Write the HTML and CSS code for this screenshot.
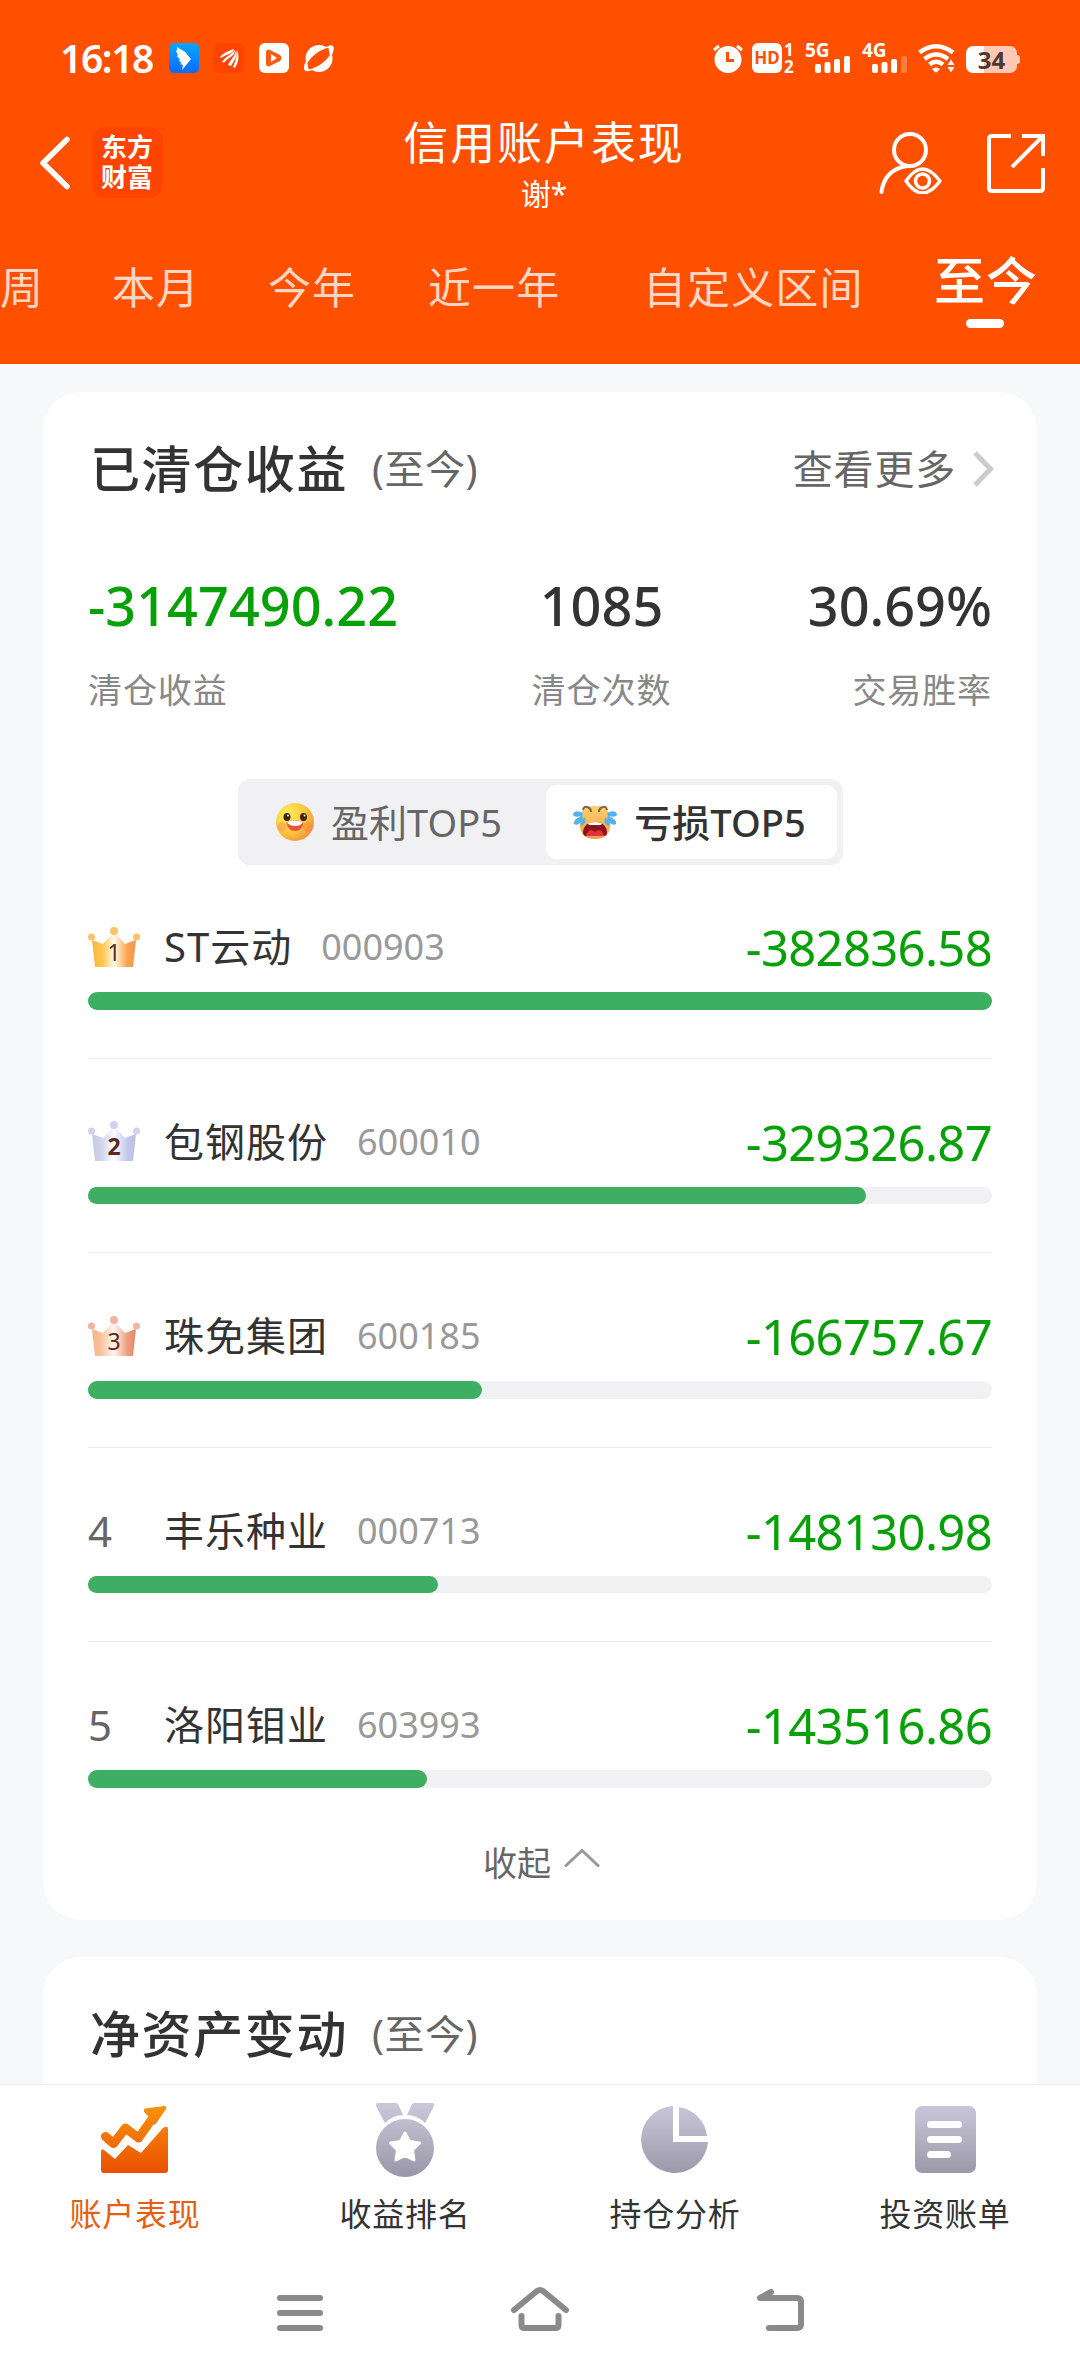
FILE: index.html
```html
<!DOCTYPE html>
<html lang="zh-CN">

<head>
  <meta charset="utf-8">
  <title>信用账户表现</title>
  <link rel="stylesheet" href="styles.css">
</head>

<body>

  <div class="header">
    <div class="status-bar">
      <span class="clock">16:18</span>
      <div class="status-apps">
        <svg width="30" height="30" viewBox="0 0 30 30">
          <defs>
            <linearGradient id="blue" x1="0" y1="0" x2="0" y2="1"><stop offset="0" stop-color="#0aa5ff"/><stop offset="1" stop-color="#0a6cff"/></linearGradient>
          </defs>
          <rect width="30" height="30" rx="5" fill="url(#blue)"/>
          <path d="M8 4c4 3 9 4 10.500 8L22 16l-4 5-5 6 1-5-3-1 2-1-3-2 1-1-3-4 1-1-2-4 1-1z" fill="#fff"/>
        </svg>
        <svg width="30" height="30" viewBox="0 0 30 30">
          <rect width="30" height="30" rx="5" fill="#ff4400"/>
          <path d="M6 14c3-4 8-6 14-8-1 5-7 5-13 9zM8 19c3-5 9-7 13-12 0 6-6 7-11 12.500zM14 22c2-5 7-8 8-15 2 7-2 10-5 16zM19 24c2-5 4-9 4-17 3 7 1 13-2 18z" fill="#fff"/>
        </svg>
        <svg width="30" height="30" viewBox="0 0 30 30">
          <rect width="30" height="30" rx="6" fill="#fff"/>
          <path d="M10 6.500l11 5.500q3 3 0 6l-11 5.500q-3 0-3-3v-11q0-3 3-3z" fill="#fa5a12"/>
          <path d="M12 11l6 4-6 4z" fill="#fff"/>
        </svg>
        <svg width="30" height="30" viewBox="0 0 30 30">
          <circle cx="15" cy="15.500" r="13.500" fill="#fff"/>
          <ellipse cx="15" cy="15.500" rx="16.500" ry="6.500" transform="rotate(-38 15 15.500)" fill="#ff5000" stroke="#fff" stroke-width="1.500"/>
          <path d="M24 3q5-2 6 2-1 5-4 8-1-6-2-10zM5 28q-5 1-5-3 0-5 3-7 1 6 2 10z" fill="#fff"/>
        </svg>
      </div>
      <div class="status-right">
        <svg class="alarm" width="30" height="30" viewBox="0 0 30 30" fill="none">
          <circle cx="15" cy="16.500" r="13.500" fill="#fff"/>
          <path d="M1 7l5-4M29 7l-5-4" stroke="#fff" stroke-width="3"/>
          <path d="M14.500 9v8.500H21" stroke="#ff5000" stroke-width="3"/>
        </svg>
        <span class="hd">HD</span>
        <span class="sims"><i>1</i><i>2</i></span>
        <div class="signal">
          <span>5G</span>
          <svg width="36" height="17" viewBox="0 0 36 17" fill="#fff">
            <rect y="8" width="6" height="9" rx="2"/><rect x="9.500" y="6" width="6" height="11" rx="2"/><rect x="19" y="3" width="6" height="14" rx="2"/><rect x="29" width="6" height="17" rx="2"/>
          </svg>
        </div>
        <div class="signal">
          <span>4G</span>
          <svg width="36" height="17" viewBox="0 0 36 17" fill="#fff">
            <rect y="8" width="6" height="9" rx="2"/><rect x="9.500" y="6" width="6" height="11" rx="2"/><rect x="19" y="3" width="6" height="14" rx="2"/><rect x="29" width="6" height="17" rx="2" opacity=".25"/>
          </svg>
        </div>
        <svg class="wifi" width="37" height="30" viewBox="0 0 37 30" fill="none" stroke="#fff" stroke-width="4.500">
          <path d="M1.500 9.500Q18 -3 35 9.500M6.500 16Q18 7 30 16M11.500 21.500Q18 16 25 21.500"/>
          <path d="M14 26q4-3 8 0l-4 4z" fill="#fff" stroke="none"/>
          <path d="M29.500 22l3.500-5.500 3.500 5.500zM29.500 24l3.500 5.500 3.500-5.500z" fill="#fff" stroke="none"/>
        </svg>
        <div class="battery">34</div>
      </div>
    </div>

    <div class="nav">
      <div class="nav-left">
        <svg width="32" height="54" viewBox="0 0 32 54" fill="none" stroke="#fff" stroke-width="5.500" stroke-linecap="round" stroke-linejoin="round">
          <path d="M28 3.500L4 27l24 23.500"/>
        </svg>
        <div class="logo">东方<br>财富</div>
      </div>
      <div class="nav-title">
        <h1>信用账户表现</h1>
        <p>谢*</p>
      </div>
      <div class="nav-right">
        <svg width="63" height="62" viewBox="0 0 63 62" fill="none" stroke="#fff" stroke-width="4" stroke-linecap="round">
          <circle cx="31" cy="18" r="16"/>
          <path d="M28 34C13 36 4 46 2.500 60"/>
          <path d="M27 49Q43 25 61 49Q43 73 27 49z" stroke-width="3.500" stroke-linejoin="round"/>
          <circle cx="43.500" cy="49" r="7" stroke-width="3.500"/>
        </svg>
        <svg width="58" height="60" viewBox="0 0 58 60" fill="none" stroke="#fff" stroke-width="4">
          <path d="M24 3H5q-3 0-3 3v49q0 3 3 3h48q3 0 3-3V35M35 3h21v20M55 4L25 34"/>
        </svg>
      </div>
    </div>

    <div class="tabs">
      <span>周</span>
      <span>本月</span>
      <span>今年</span>
      <span>近一年</span>
      <span>自定义区间</span>
      <span class="active">至今</span>
    </div>
  </div>

  <div class="content">
    <div class="card">
      <div class="card-head">
        <h2>已清仓收益</h2>
        <span class="range">(至今)</span>
        <span class="more">查看更多</span>
        <svg width="21" height="36" viewBox="0 0 21 36" fill="none" stroke="#ccc" stroke-width="5"><path d="M2 2l15.500 16L2 34"/></svg>
      </div>

      <div class="stats">
        <div class="stat">
          <div class="stat-value green">-3147490.22</div>
          <div class="stat-label">清仓收益</div>
        </div>
        <div class="stat">
          <div class="stat-value">1085</div>
          <div class="stat-label">清仓次数</div>
        </div>
        <div class="stat">
          <div class="stat-value">30.69%</div>
          <div class="stat-label">交易胜率</div>
        </div>
      </div>

      <div class="switch">
        <div class="switch-item">
          <svg width="38" height="38" viewBox="0 0 38 38">
            <defs>
              <radialGradient id="smile" cx=".3" cy=".3" r=".85"><stop offset="0" stop-color="#ffed62"/><stop offset=".55" stop-color="#ffc83a"/><stop offset="1" stop-color="#ee8a43"/></radialGradient>
            </defs>
            <circle cx="19" cy="19" r="19" fill="url(#smile)"/>
            <circle cx="6" cy="24" r="5" fill="#ff9b53" opacity=".6"/>
            <circle cx="32" cy="24" r="5" fill="#ff7d43" opacity=".5"/>
            <ellipse cx="11" cy="14" rx="3.500" ry="4" fill="#40230f"/><ellipse cx="27.500" cy="14" rx="3.500" ry="4" fill="#40230f"/>
            <circle cx="12" cy="12.500" r="1" fill="#fff"/><circle cx="28.500" cy="12.500" r="1" fill="#fff"/>
            <path d="M10.500 19q8.500-3 17 0-1 9-8.500 9t-8.500-9z" fill="#f0523c"/>
            <path d="M11 19q8-3 16 0-2 4-8 4t-8-4z" fill="#fff"/>
          </svg>
          <span>盈利TOP5</span>
        </div>
        <div class="switch-item selected">
          <svg width="44" height="36" viewBox="0 0 44 36">
            <defs>
              <linearGradient id="cry" x1="0" y1="0" x2="0" y2="1"><stop offset="0" stop-color="#ffd070"/><stop offset="1" stop-color="#f0a045"/></linearGradient>
            </defs>
            <path d="M22 2c13 0 16 8 15.500 17S34 35 22 35 7 28 6.500 19 9 2 22 2z" fill="url(#cry)"/>
            <path d="M10 6q1-4 4-3 4 1 4 5M34 6q-1-4-4-3-4 1-4 5" fill="none" stroke="#806040" stroke-width="2"/>
            <path d="M10 28q1-10 12-10t12 10q0 4-3 4H13q-3 0-3-4z" fill="#8f1218"/>
            <path d="M15 19.500q7-3 14 0l-1 1.500H16z" fill="#fff"/>
            <path d="M13 32q1-6 6-6l3 2 3-2q5 0 6 6z" fill="#dc3440"/>
            <path d="M10 9Q2 5 0 10q0 4 9 2zM9 12Q0 15 1 20q5 3 9-6zM12 13Q6 18 8 22q6-1 4-9zM34 9q8-4 10 1 0 4-9 2zM35 12q9 3 8 8-5 3-9-6zM32 13q6 5 4 9-6-1-4-9z" fill="#52b2ec"/>
          </svg>
          <span>亏损TOP5</span>
        </div>
      </div>

      <div class="rank-list">
        <div class="rank-item">
          <div class="rank-row">
            <div class="rank-no">
              <svg width="52" height="41" viewBox="0 0 52 41">
                <defs>
                  <linearGradient id="gold"><stop offset="0" stop-color="#fbb836"/><stop offset=".25" stop-color="#fdc655"/><stop offset=".5" stop-color="#fffbe8"/><stop offset=".8" stop-color="#fba44f"/><stop offset="1" stop-color="#f2964d"/></linearGradient>
                </defs>
                <path d="M4 13l11 4L26 5l11 12 11-4-3 27H7z" fill="url(#gold)"/>
                <g fill="#f9c466"><circle cx="3.500" cy="10" r="3.500"/><circle cx="26" cy="4" r="4"/><circle cx="48.500" cy="10" r="3.500"/></g>
                <text class="crown-no" x="26" y="34" text-anchor="middle">1</text>
              </svg>
            </div>
            <span class="stock">ST云动</span>
            <span class="code">000903</span>
            <span class="amount">-382836.58</span>
          </div>
          <div class="track"><div class="fill" style="width: 100%"></div></div>
        </div>

        <div class="rank-item">
          <div class="rank-row">
            <div class="rank-no">
              <svg width="52" height="41" viewBox="0 0 52 41">
                <defs>
                  <linearGradient id="silver"><stop offset="0" stop-color="#c3c8ea"/><stop offset=".2" stop-color="#cfd3ec"/><stop offset=".5" stop-color="#fcfcff"/><stop offset=".8" stop-color="#c3c8ea"/><stop offset="1" stop-color="#babfe8"/></linearGradient>
                </defs>
                <path d="M4 13l11 4L26 5l11 12 11-4-3 27H7z" fill="url(#silver)"/>
                <g fill="#ced2ef"><circle cx="3.500" cy="10" r="3.500"/><circle cx="26" cy="4" r="4"/><circle cx="48.500" cy="10" r="3.500"/></g>
                <text class="crown-no bold" x="26" y="34" text-anchor="middle">2</text>
              </svg>
            </div>
            <span class="stock">包钢股份</span>
            <span class="code">600010</span>
            <span class="amount">-329326.87</span>
          </div>
          <div class="track"><div class="fill" style="width: 86.02%"></div></div>
        </div>

        <div class="rank-item">
          <div class="rank-row">
            <div class="rank-no">
              <svg width="52" height="41" viewBox="0 0 52 41">
                <defs>
                  <linearGradient id="bronze"><stop offset="0" stop-color="#f5b48c"/><stop offset=".2" stop-color="#f9c19b"/><stop offset=".5" stop-color="#fff6f0"/><stop offset=".8" stop-color="#ed9f80"/><stop offset="1" stop-color="#e5866b"/></linearGradient>
                </defs>
                <path d="M4 13l11 4L26 5l11 12 11-4-3 27H7z" fill="url(#bronze)"/>
                <g fill="#efb5a0"><circle cx="3.500" cy="10" r="3.500"/><circle cx="26" cy="4" r="4"/><circle cx="48.500" cy="10" r="3.500"/></g>
                <text class="crown-no" x="26" y="34" text-anchor="middle">3</text>
              </svg>
            </div>
            <span class="stock">珠免集团</span>
            <span class="code">600185</span>
            <span class="amount">-166757.67</span>
          </div>
          <div class="track"><div class="fill" style="width: 43.56%"></div></div>
        </div>

        <div class="rank-item">
          <div class="rank-row">
            <div class="rank-no">4</div>
            <span class="stock">丰乐种业</span>
            <span class="code">000713</span>
            <span class="amount">-148130.98</span>
          </div>
          <div class="track"><div class="fill" style="width: 38.69%"></div></div>
        </div>

        <div class="rank-item">
          <div class="rank-row">
            <div class="rank-no">5</div>
            <span class="stock">洛阳钼业</span>
            <span class="code">603993</span>
            <span class="amount">-143516.86</span>
          </div>
          <div class="track"><div class="fill" style="width: 37.49%"></div></div>
        </div>
      </div>

      <div class="collapse">
        <span>收起</span>
        <svg width="36" height="20" viewBox="0 0 36 20" fill="none" stroke="#999" stroke-width="3"><path d="M1 18.500L18 2.500l17 16"/></svg>
      </div>
    </div>

    <div class="card">
      <div class="card-head">
        <h2>净资产变动</h2>
        <span class="range">(至今)</span>
      </div>
    </div>
  </div>

  <div class="tabbar">
    <div class="tabbar-item current">
      <svg width="68" height="76" viewBox="0 0 68 76">
        <defs>
          <linearGradient id="orange" gradientUnits="userSpaceOnUse" x1="0" y1="5" x2="0" y2="70"><stop offset="0" stop-color="#f9930c"/><stop offset="1" stop-color="#e95200"/></linearGradient>
          <linearGradient id="gray" gradientUnits="userSpaceOnUse" x1="0" y1="5" x2="0" y2="74"><stop offset="0" stop-color="#c8c6d8"/><stop offset="1" stop-color="#9a98a8"/></linearGradient>
        </defs>
        <path d="M4.500 35.500l8 7 12-15.500 13 10 15-21" fill="none" stroke="url(#orange)" stroke-width="9" stroke-linecap="round" stroke-linejoin="round"/>
        <path d="M44 7.500L63 5q3 0 2 3L54 24l-5-7-3-3q-5-4-2-6.500z" fill="url(#orange)"/>
        <path d="M3 49l11 9 13-14 13 8 22-25q5-3 5 1v41q0 3-3 3H3q-3 0-3-3V51q0-4 3-2z" fill="url(#orange)"/>
      </svg>
      <span>账户表现</span>
    </div>
    <div class="tabbar-item">
      <svg width="68" height="76" viewBox="0 0 68 76">
        <path d="M7 2h18q2 0 3 3l4 9q-10 0-18 8L5 5q-1-3 2-3zM61 2H43q-2 0-3 3l-4 9q10 0 18 8L63 5q1-3-2-3z" fill="url(#gray)"/>
        <circle cx="34" cy="47" r="29" fill="url(#gray)"/>
        <path d="M34 32l4.500 8.500 10 1.500-7 7 1.500 10-9-4.500-9 4.500 1.500-10-7-7 10-1.500z" fill="#fff" stroke="#fff" stroke-width="3" stroke-linejoin="round"/>
      </svg>
      <span>收益排名</span>
    </div>
    <div class="tabbar-item">
      <svg width="68" height="76" viewBox="0 0 68 76">
        <path d="M32 5v36h35A33.500 33.500 0 1 1 32 5z" fill="url(#gray)"/>
        <path d="M38 6a33 33 0 0 1 28 29H38z" fill="url(#gray)"/>
      </svg>
      <span>持仓分析</span>
    </div>
    <div class="tabbar-item">
      <svg width="68" height="76" viewBox="0 0 68 76">
        <rect x="4" y="5" width="61" height="67" rx="7" fill="url(#gray)"/>
        <path d="M19.500 23.500h28M19.500 38.500h28M19.500 53.500h17" stroke="#fff" stroke-width="7" stroke-linecap="round"/>
      </svg>
      <span>投资账单</span>
    </div>
  </div>

  <div class="system-nav">
    <svg width="60" height="46" viewBox="0 0 60 46"><path d="M10 12h40M10 27h40M10 42h40"/></svg>
    <svg width="60" height="46" viewBox="0 0 60 46"><path d="M4 24L27 5q3-2 6 0l23 19M11.500 30v9q0 3 3 3h31q3 0 3-3v-9"/></svg>
    <svg width="60" height="46" viewBox="0 0 60 46"><path d="M21 6L10 12h37q4 0 4 4v22q0 4-4 4H19"/></svg>
  </div>

</body>

</html>
```
FILE: styles.css
```css
* {
  box-sizing: border-box;
}

body {
  display: flex;
  flex-direction: column;
  width: 1080px;
  height: 2376px;
  margin: 0;
  overflow: hidden;
  background-color: #f7f8fa;
  color: #333;
  font-family: "Noto Sans", "Noto Sans CJK SC", sans-serif;
}

h1,
h2,
p {
  margin: 0;
  font-weight: 400;
}

svg {
  display: block;
  flex: none;
}

.header {
  flex: none;
  height: 364px;
  background-color: #ff5000;
  color: #fff;
}

/* Status bar */
.status-bar {
  display: flex;
  align-items: center;
  height: 116px;
  padding: 0 63px 0 60px;
}

.clock {
  width: 109px;
  font-size: 39px;
  font-weight: 600;
  line-height: 40px;
  letter-spacing: -1.4px;
}

.status-apps {
  display: flex;
  gap: 15px;
}

.status-right {
  display: flex;
  align-items: center;
  margin-left: auto;
}

.hd {
  width: 30px;
  height: 30px;
  margin-left: 9px;
  border-radius: 6px;
  background-color: #fff;
  color: #ff5000;
  font-size: 17px;
  font-weight: 700;
  line-height: 30px;
  text-align: center;
}

.sims {
  display: flex;
  flex-direction: column;
  width: 14px;
  margin-left: 2px;
  font-size: 17px;
  font-weight: 700;
  line-height: 17px;
}

.sims i {
  font-style: normal;
}

.signal {
  display: flex;
  flex-direction: column;
  width: 57px;
  height: 30px;
  padding-left: 7px;
}

.signal span {
  height: 13px;
  font-size: 19px;
  font-weight: 700;
  line-height: 14px;
}

.signal svg {
  margin-left: 10px;
}

.wifi {
  margin-left: 6px;
}

.battery {
  width: 51px;
  height: 27px;
  margin: 2px 0 0 11px;
  border-radius: 7px;
  background: linear-gradient(to right, #fff 35%, #ffc9b3 35%);
  color: #4a3832;
  font-size: 24px;
  font-weight: 700;
  line-height: 27px;
  text-align: center;
}

/* the small cap on the battery's right side */
.battery::after {
  content: "";
  float: right;
  width: 3px;
  height: 9px;
  margin: 9px -3px 0 -3px;
  border-radius: 0 3px 3px 0;
  background-color: #ffc9b3;
}

/* Title row */
.nav {
  display: flex;
  justify-content: space-between;
  height: 116px;
  padding: 0 35px 0 39px;
}

.nav-left,
.nav-right {
  display: flex;
  align-items: center;
  width: 280px;
  height: 93px;
}

.nav-left {
  gap: 21px;
}

.nav-right {
  justify-content: flex-end;
  gap: 45px;
}

.logo {
  width: 71px;
  height: 71px;
  padding: 5px 0 0 9px;
  border-radius: 14px;
  background-color: #ff4400;
  font-size: 26px;
  font-weight: 700;
  line-height: 30px;
}

.nav-title {
  margin-right: -4px;
  text-align: center;
}

.nav-title h1 {
  font-size: 45px;
  line-height: 54px;
  letter-spacing: 1.9px;
}

.nav-title p {
  font-size: 30px;
  line-height: 48px;
}

/* Period tabs */
.tabs {
  display: grid;
  grid-template-columns: 112px 156px 160px 215px 291px 1fr;
  height: 110px;
  color: #ffd6c4;
  font-size: 43px;
  line-height: 112px;
  letter-spacing: 1.1px;
}

.tabs span {
  white-space: nowrap;
}

.tabs .active {
  display: flex;
  flex-direction: column;
  width: 104px;
  color: #fff;
  font-size: 51px;
  font-weight: 500;
  line-height: 96px;
}

.tabs .active::after {
  content: "";
  width: 38px;
  height: 9px;
  margin: -9px 0 0 32px;
  border-radius: 5px;
  background-color: #fff;
}

/* Cards */
.content {
  display: flex;
  flex-direction: column;
  flex: 1;
  gap: 37px;
  min-height: 0;
  padding: 28px 43px 0;
  overflow: hidden;
}

.card {
  flex: none;
  height: 1528px;
  padding: 39px 45px 0;
  border-radius: 38px;
  background-color: #fff;
}

.card-head {
  display: flex;
  height: 78px;
  line-height: 76px;
}

.card-head h2 {
  padding-left: 2px;
  font-size: 50px;
  font-weight: 500;
  letter-spacing: 1.6px;
}

.range {
  margin-left: 24px;
  color: #666;
  font-size: 40px;
  letter-spacing: 0.5px;
}

.more {
  margin: 0 17px 0 auto;
  color: #666;
  font-size: 40px;
  letter-spacing: 0.8px;
}

.card-head svg {
  margin: 20px -2px 0 0;
}

.stats {
  display: flex;
  justify-content: space-between;
  margin-top: 63px;
}

.stat {
  width: 320px;
}

.stat:nth-child(2) {
  width: 200px;
  margin-right: -93px;
  text-align: center;
}

.stat:nth-child(3) {
  width: 290px;
  text-align: right;
}

.stat-value {
  font-size: 54px;
  font-weight: 500;
  line-height: 66px;
}

.green {
  color: #07a007;
}

.stat-label {
  margin-top: 30px;
  color: #888;
  font-size: 34px;
  line-height: 45px;
  letter-spacing: 0.9px;
}

.switch {
  display: flex;
  width: 605px;
  height: 86px;
  margin: 66px auto 0;
  padding: 6px;
  border-radius: 12px;
  background-color: #f1f1f4;
}

.switch-item {
  display: flex;
  align-items: center;
  justify-content: center;
  gap: 17px;
  width: 302px;
  padding-right: 11px;
  border-radius: 11px;
  color: #666;
  font-size: 38px;
  line-height: 72px;
}

.switch-item.selected {
  width: 291px;
  padding-right: 3px;
  background-color: #fff;
  color: #333;
  font-weight: 500;
}

/* Ranking */
.rank-list {
  margin-top: -1px;
}

.rank-item {
  height: 194.5px;
  padding-top: 53px;
  border-bottom: 1px solid #e8e9ea;
}

.rank-item:last-child {
  border-bottom: none;
}

.rank-row {
  display: flex;
  align-items: center;
  height: 60px;
  line-height: 60px;
}

.rank-no {
  width: 76px;
  color: #666;
  font-size: 42px;
}

.crown-no {
  fill: #61281d;
  font-size: 23px;
}

.crown-no.bold {
  font-weight: 700;
}

.stock {
  font-size: 40px;
  letter-spacing: 1px;
}

.code {
  margin-left: 29px;
  color: #999;
  font-size: 36px;
}

.amount {
  margin-left: auto;
  color: #07a007;
  font-size: 49px;
  letter-spacing: -0.7px;
}

.track {
  height: 17.5px;
  margin-top: 15px;
  border-radius: 9px;
  background-color: #f1f1f4;
}

.fill {
  height: 100%;
  border-radius: 9px;
  background-color: #3eaf62;
}

.collapse {
  display: flex;
  align-items: center;
  justify-content: center;
  gap: 13px;
  height: 52px;
  padding-left: 3px;
  color: #666;
  font-size: 34px;
  line-height: 52px;
}

.collapse svg {
  margin-top: -9px;
}

/* Bottom tabs */
.tabbar {
  display: flex;
  flex: none;
  height: 166px;
  border-top: 1px solid #e8e9ea;
  background-color: #fff;
}

.tabbar-item {
  display: flex;
  flex-direction: column;
  align-items: center;
  width: 270px;
  padding-top: 16px;
  font-size: 32px;
  line-height: 44px;
  letter-spacing: 0.7px;
}

.tabbar-item span {
  margin-top: 15px;
}

.tabbar-item.current {
  color: #e45f13;
}

/* Phone navigation keys */
.system-nav {
  display: flex;
  flex: none;
  justify-content: center;
  gap: 180px;
  height: 126px;
  padding-top: 36px;
  background-color: #fff;
}

.system-nav path {
  fill: none;
  stroke: #8a8a8a;
  stroke-width: 6;
  stroke-linecap: round;
  stroke-linejoin: round;
}
```
